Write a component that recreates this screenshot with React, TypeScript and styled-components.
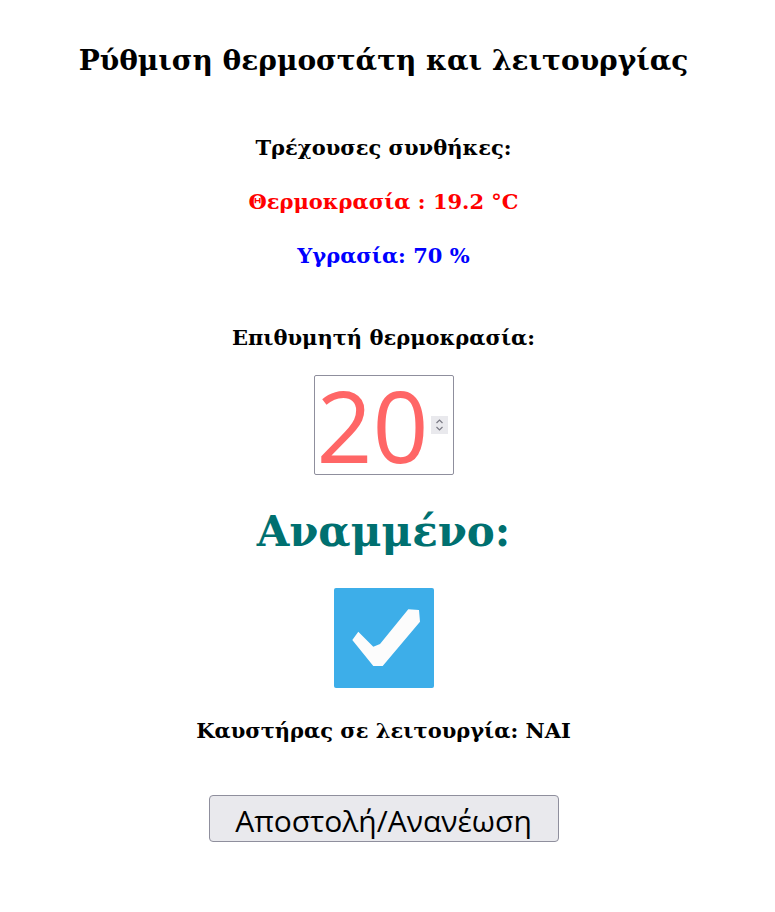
import React from "react";
import styled, { createGlobalStyle } from "styled-components";

const Global = createGlobalStyle`
  body { margin: 8px; background: #fff; font-family: "DejaVu Serif", serif; }
`;

const Page = styled.div`
  display: flex;
  flex-direction: column;
  align-items: center;
  text-align: center;
  padding-right: 8px;
`;

const Title = styled.h2`
  font-size: 28px;
  font-weight: bold;
  margin: 36px 0 0;
  color: #000;
`;

const Line = styled.p<{ $color?: string; $mt: number }>`
  font-size: 21px;
  font-weight: bold;
  margin: ${(p) => p.$mt}px 0 0;
  color: ${(p) => p.$color || "#000"};
`;

const InputBox = styled.div`
  margin-top: 25px;
  width: 140px;
  height: 100px;
  box-sizing: border-box;
  display: flex;
  align-items: center;
  gap: 2px;
  padding: 0 5px 0 2px;
  border: 1px solid #8f8f9d;
  border-radius: 2px;
`;

const NumberField = styled.input`
  flex: 1;
  min-width: 0;
  height: 98px;
  border: none;
  outline: none;
  padding: 0;
  background: transparent;
  font-size: 98px;
  line-height: 98px;
  color: #ff6666;
  font-family: "Open Sans", "Noto Sans", sans-serif;
  -moz-appearance: textfield;
  &::-webkit-inner-spin-button,
  &::-webkit-outer-spin-button {
    -webkit-appearance: none;
    margin: 0;
  }
`;

const Spinner = styled.div`
  flex: none;
  width: 17px;
  height: 18px;
  background: #e9e9ed;
  display: flex;
  align-items: center;
  justify-content: center;
`;

const Big = styled.h1`
  font-size: 42px;
  font-weight: bold;
  color: #007070;
  margin: 32px 0 0;
`;

const Check = styled.div`
  margin-top: 32px;
  width: 100px;
  height: 100px;
  background: #3daee9;
  border-radius: 2px;
`;

const Send = styled.button`
  margin-top: 52px;
  width: 350px;
  height: 47px;
  padding: 3px 0 0;
  font-size: 30px;
  font-family: "Open Sans", "Noto Sans", sans-serif;
  background: #e9e9ed;
  border: 1px solid #8f8f9d;
  border-radius: 4px;
  color: #000;
`;

export default function App() {
  return (
    <Page>
      <Global />
      <Title>Ρύθμιση θερμοστάτη και λειτουργίας</Title>
      <Line $mt={58}>Τρέχουσες συνθήκες:</Line>
      <Line $mt={29} $color="#ff0000">Θερμοκρασία : 19.2 °C</Line>
      <Line $mt={29} $color="#0000ff">Υγρασία: 70 %</Line>
      <Line $mt={57}>Επιθυμητή θερμοκρασία:</Line>
      <InputBox>
        <NumberField type="number" defaultValue={20} />
        <Spinner>
          <svg width="11" height="14" viewBox="0 0 11 14">
            <path d="M2.5 5 L5.5 2 L8.5 5 M2.5 9 L5.5 12 L8.5 9" fill="none" stroke="#7a7a84" strokeWidth="1.2" />
          </svg>
        </Spinner>
      </InputBox>
      <Big>Αναμμένο:</Big>
      <Check>
        <svg width="100" height="100" viewBox="0 0 100 100">
          <polygon
            points="18.3,52 24.3,43.7 39.3,58.7 46,56 74.3,21.3 85,22 86,33.7 48.7,78 39.3,78"
            fill="#fcfcfc"
          />
        </svg>
      </Check>
      <Line $mt={30}>Καυστήρας σε λειτουργία: ΝΑΙ</Line>
      <Send>Αποστολή/Ανανέωση</Send>
    </Page>
  );
}
